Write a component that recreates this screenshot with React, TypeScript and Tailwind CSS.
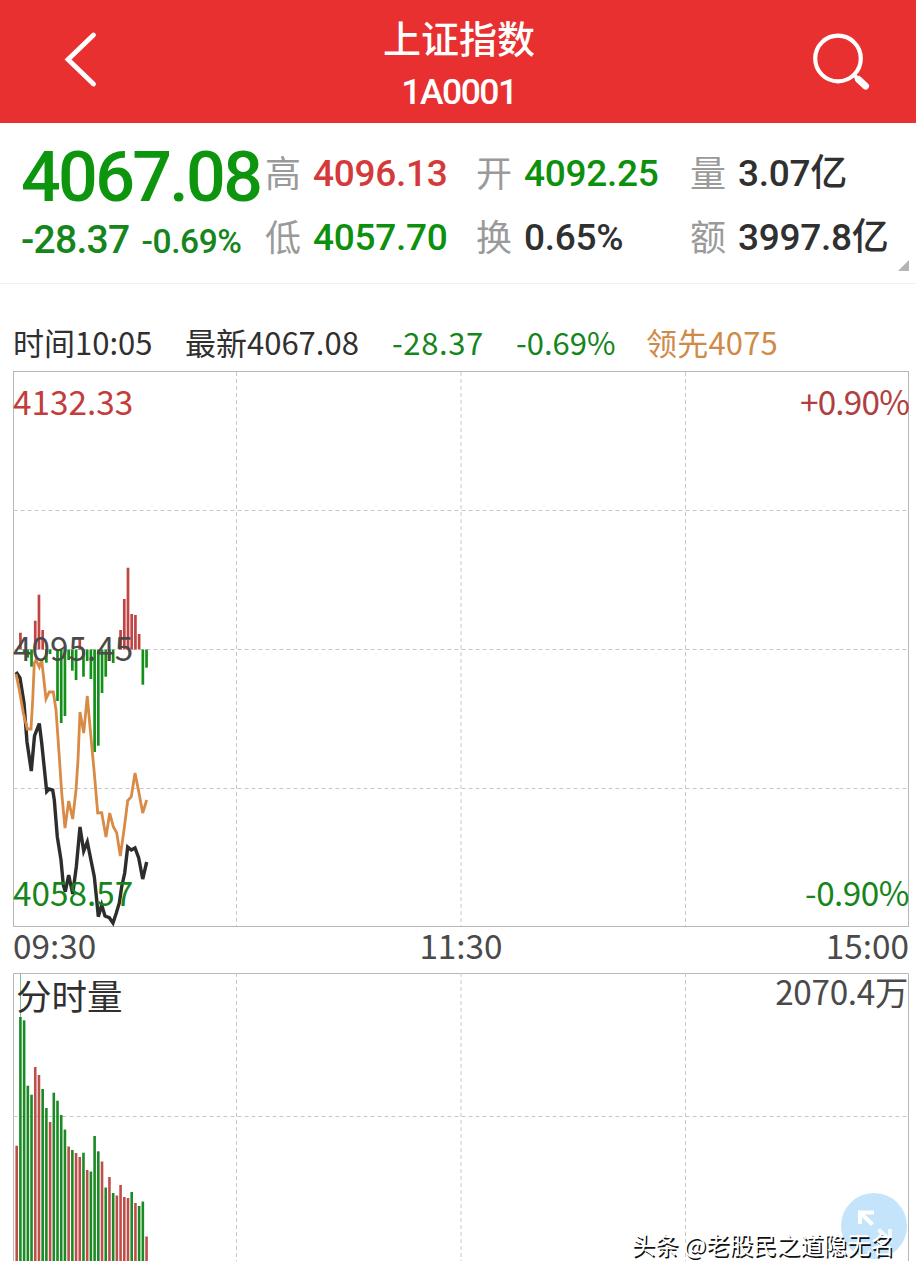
import clsx from 'clsx';

type Bar = [level: number, up: boolean];

const FIRST_X = 16.7;
const STEP = 3.71;
const ZERO_Y = 649.5;
const VOLUME_BOTTOM = 1261;

// end of every momentum bar, null where the minute has none
const momentum: (number | null)[] = [
  null, 632.7, 653.5, 657.7, 666.7, 620.7, 594.7, 630, 662.7, 654, null, 701,
  723, 716, 660, 670.7, 680, 637, 676.7, 661, 679, 752, 745.7, 693, 676.7, 661,
  663, null, 630, 599, 567.7, 614, 615, 634, 684.7, 667.7,
];

const volume: Bar[] = [
  [1145.7, true], [1017, false], [1020.3, false], [1085.7, false],
  [1094.7, false], [1067, true], [1075, true], [1089, false],
  [1108, false], [1122, true], [1092.7, false], [1100.7, false],
  [1115, false], [1129.5, false], [1146.5, true], [1150, false],
  [1153, true], [1157, true], [1152.7, false], [1170, true],
  [1171.5, false], [1136, false], [1151.3, false], [1161.5, true],
  [1187.5, false], [1177, true], [1193, false], [1195.5, true],
  [1185, true], [1197, true], [1198, true], [1192, false],
  [1203, true], [1206, false], [1201.5, false], [1236.5, true],
];

const priceLine =
  '16,672 20,678 24,703 27,742 31.3,771 34.5,736 39.3,723.5 41.7,743 46.7,791.5 49,789 52.7,790 54.3,800 57.3,836.7 61,860 63.3,885 65.3,891.7 68.7,875 72.7,894 76.3,866.7 80,827 83.7,851 87.3,842 94.3,876.7 96.7,900 98.3,916.7 101.7,905 105,916 109.3,917.7 113,923 116.3,913 119.3,903 121.7,886.7 124.7,873 127.7,847 131.3,850 135,848 138.7,858 142.7,879 146.7,862';

const leadLine =
  '16,674 19.3,690 23.3,713 27.3,729 31,729 32.7,700 34.3,663 36,660 39.3,667 41.7,660 46,699 49.3,692 53.3,692 56,710 59.3,757 61.7,793 65,828 68.7,801 72.7,819 76,790 78,760 80,712 83.7,733 87.3,696 90,726.7 92.7,756 94.3,773 97.7,813 101.7,812.7 106,837 109.7,813 113.3,826.7 116.7,832.7 120.3,856 124,830 127.7,800.7 131.3,796.7 135,773 139,793 142.7,813 146.7,800';

const cjk = "font-['Noto_Sans_CJK_SC',sans-serif]";
const num = "font-['Roboto','Noto_Sans_CJK_SC',sans-serif]";

function Header() {
  return (
    <header className="flex h-[123px] items-center justify-between bg-[#e83030] text-white">
      <button className="mb-1 ml-[60px] w-12" aria-label="back">
        <svg width="48" height="60" viewBox="0 0 48 60" fill="none">
          <path
            d="M33.500 5 8 29.500l25.500 24.500"
            stroke="#fff"
            strokeWidth="4.800"
            strokeLinecap="round"
            strokeLinejoin="miter"
          />
        </svg>
      </button>
      <div className="flex flex-col items-center">
        <h1 className={clsx(cjk, 'text-[38px] leading-[50px] font-medium')}>
          上证指数
        </h1>
        <span
          className={clsx(
            num,
            '-mb-1 pt-[7px] text-[35.500px] leading-[46px] font-medium tracking-[-1.500px]',
          )}
        >
          1A0001
        </span>
      </div>
      <button className="mr-[42px] mb-1 w-[64px]" aria-label="search">
        <svg width="64" height="64" viewBox="0 0 64 64" fill="none">
          <g stroke="#fff" strokeLinecap="round">
            <circle cx="28" cy="30.500" r="22.800" strokeWidth="4.200" />
            <path d="m44 47 3 3" strokeWidth="4" />
            <path d="m48.500 51.500 7 6.500" strokeWidth="7" />
          </g>
        </svg>
      </button>
    </header>
  );
}

function Cell({
  label,
  value,
  color,
}: {
  label: string;
  value: string;
  color: string;
}) {
  return (
    <div className="flex h-16 items-center whitespace-nowrap">
      <span className={clsx(cjk, 'w-[48px] pb-[6px] text-[36px] text-[#9a9a9a]')}>
        {label}
      </span>
      <span
        className={clsx(
          num,
          'text-[37px] font-medium tracking-[-0.300px]',
          color,
        )}
      >
        {value}
      </span>
    </div>
  );
}

function Quote() {
  return (
    <section className="relative flex h-[161px] border-b border-[#f0f0f0] pt-[19px]">
      <div className="w-[265px] pl-[21px] whitespace-nowrap text-[#0d950d]">
        <div
          className={clsx(
            num,
            'h-[68px] pt-[1px] text-[70px] leading-[68px] font-medium tracking-[-2.700px]',
          )}
        >
          4067.08
        </div>
        <div
          className={clsx(
            num,
            'flex h-[58px] items-baseline gap-3 pt-[1px] leading-[58px] font-medium text-[#16851c]',
          )}
        >
          <span className="text-[39px] tracking-[-0.700px]">-28.37</span>
          <span className="text-[33.500px] tracking-[-0.400px]">-0.69%</span>
        </div>
      </div>
      <div className="w-[211px]">
        <Cell label="高" value="4096.13" color="text-[#d43a3a]" />
        <Cell label="低" value="4057.70" color="text-[#0d900d]" />
      </div>
      <div className="w-[214px]">
        <Cell label="开" value="4092.25" color="text-[#0d900d]" />
        <Cell label="换" value="0.65%" color="text-[#303030]" />
      </div>
      <div>
        <Cell label="量" value="3.07亿" color="text-[#303030]" />
        <Cell label="额" value="3997.8亿" color="text-[#303030]" />
      </div>
      <svg
        className="absolute right-[7px] bottom-[12px]"
        width="11"
        height="11"
        viewBox="0 0 11 11"
      >
        <path d="M11 0v11H0z" fill="#b4b4b4" />
      </svg>
    </section>
  );
}

function InfoRow() {
  return (
    <div
      className={clsx(
        cjk,
        'flex h-[87px] items-center pt-[30px] pl-[13px] text-[31px] whitespace-nowrap text-[#303030]',
      )}
    >
      <span className="w-[172px]">时间10:05</span>
      <span className="w-[207px]">最新4067.08</span>
      <span className="w-[124px] tracking-[0.600px] text-[#16851c]">
        -28.37
      </span>
      <span className="w-[130px] text-[#16851c]">-0.69%</span>
      <span className="tracking-[0.200px] text-[#d08a48]">领先4075</span>
    </div>
  );
}

function Grid({
  top,
  bottom,
  rows,
}: {
  top: number;
  bottom: number;
  rows: number[];
}) {
  return (
    <g stroke="#c8c8c8" strokeDasharray="4 3">
      {[236.5, 461, 685.5].map((x) => (
        <path key={x} d={`M${x} ${top}V${bottom}`} />
      ))}
      {rows.map((y) => (
        <path key={y} d={`M13.500 ${y}H908`} />
      ))}
    </g>
  );
}

function PriceChart() {
  return (
    <section
      className={clsx(cjk, 'relative h-[556px] text-[33.300px] leading-[40px]')}
    >
      <svg
        className="block"
        width="916"
        height="556"
        viewBox="0 371 916 556"
        fill="none"
      >
        <rect x="13.500" y="371.500" width="895" height="555" stroke="#b8b8b8" />
        <Grid top={372} bottom={926} rows={[510.5, ZERO_Y, 788.5]} />
        {momentum.map(
          (y, i) =>
            y !== null && (
              <path
                key={i}
                d={`M${FIRST_X + i * STEP} ${ZERO_Y}V${y}`}
                stroke={y < ZERO_Y ? '#c04444' : '#14901a'}
                strokeWidth="2.700"
              />
            ),
        )}
        <polyline points={priceLine} stroke="#2d2d2d" strokeWidth="3.400" />
        <polyline points={leadLine} stroke="#d98a45" strokeWidth="2.800" />
      </svg>
      <span className="absolute top-[10px] left-[13px] text-[#c43c3c]">
        4132.33
      </span>
      <span className="absolute top-[10px] right-[7px] tracking-[-0.800px] text-[#b04040]">
        +0.90%
      </span>
      <span className="absolute top-[256px] left-[13px] text-[#4a4a4a]">
        4095.45
      </span>
      <span className="absolute top-[501px] left-[13px] text-[#16851c]">
        4058.57
      </span>
      <span className="absolute top-[501px] right-[7px] tracking-[-0.500px] text-[#16851c]">
        -0.90%
      </span>
    </section>
  );
}

function TimeAxis() {
  return (
    <div
      className={clsx(
        cjk,
        'grid h-[46px] grid-cols-3 pr-[7px] pl-[13px] text-[33.300px] leading-[35px] text-[#4a4a4a]',
      )}
    >
      <span>09:30</span>
      <span className="text-center">11:30</span>
      <span className="text-right">15:00</span>
    </div>
  );
}

function VolumeChart() {
  return (
    <section className={clsx(cjk, 'relative h-[305px]')}>
      <svg
        className="block"
        width="916"
        height="305"
        viewBox="0 973 916 305"
        fill="none"
      >
        <path d="M13.500 1261V973.500H908.500V1261" stroke="#b8b8b8" />
        <Grid top={973} bottom={1261} rows={[1116.5]} />
        <path d="M20.500 973V1020" stroke="#7cc08a" />
        {volume.map(([y, up], i) => (
          <path
            key={i}
            d={`M${FIRST_X + i * STEP} ${VOLUME_BOTTOM}V${y}`}
            stroke={up ? '#bd4f4b' : '#1c8a24'}
            strokeWidth="2.600"
          />
        ))}
        <circle cx="874" cy="1226" r="33" fill="#c3e4fb" />
        <g stroke="#fff" strokeWidth="4">
          <path d="M860 1224V1212.500H874M860.500 1213l12 11.500" />
          <path
            d="M890 1229V1240.500H877M889.500 1240l-11-10.500"
            opacity="0.8"
          />
        </g>
      </svg>
      <span className="absolute top-[2px] left-[16px] text-[35.500px] leading-[40px] text-[#303030]">
        分时量
      </span>
      <span className="absolute top-[-2px] right-[8px] text-[33.300px] leading-[40px] tracking-[-0.300px] text-[#4a4a4a]">
        2070.4万
      </span>
      <span className="absolute top-[255px] right-[22px] text-[23.500px] leading-[32px] whitespace-nowrap text-white [text-shadow:1.500px_1.500px_0_#111]">
        头条 @老股民之道隐无名
      </span>
    </section>
  );
}

export default function App() {
  return (
    <main className="h-[1278px] w-[916px] overflow-hidden bg-white">
      <Header />
      <Quote />
      <InfoRow />
      <PriceChart />
      <TimeAxis />
      <VolumeChart />
    </main>
  );
}
